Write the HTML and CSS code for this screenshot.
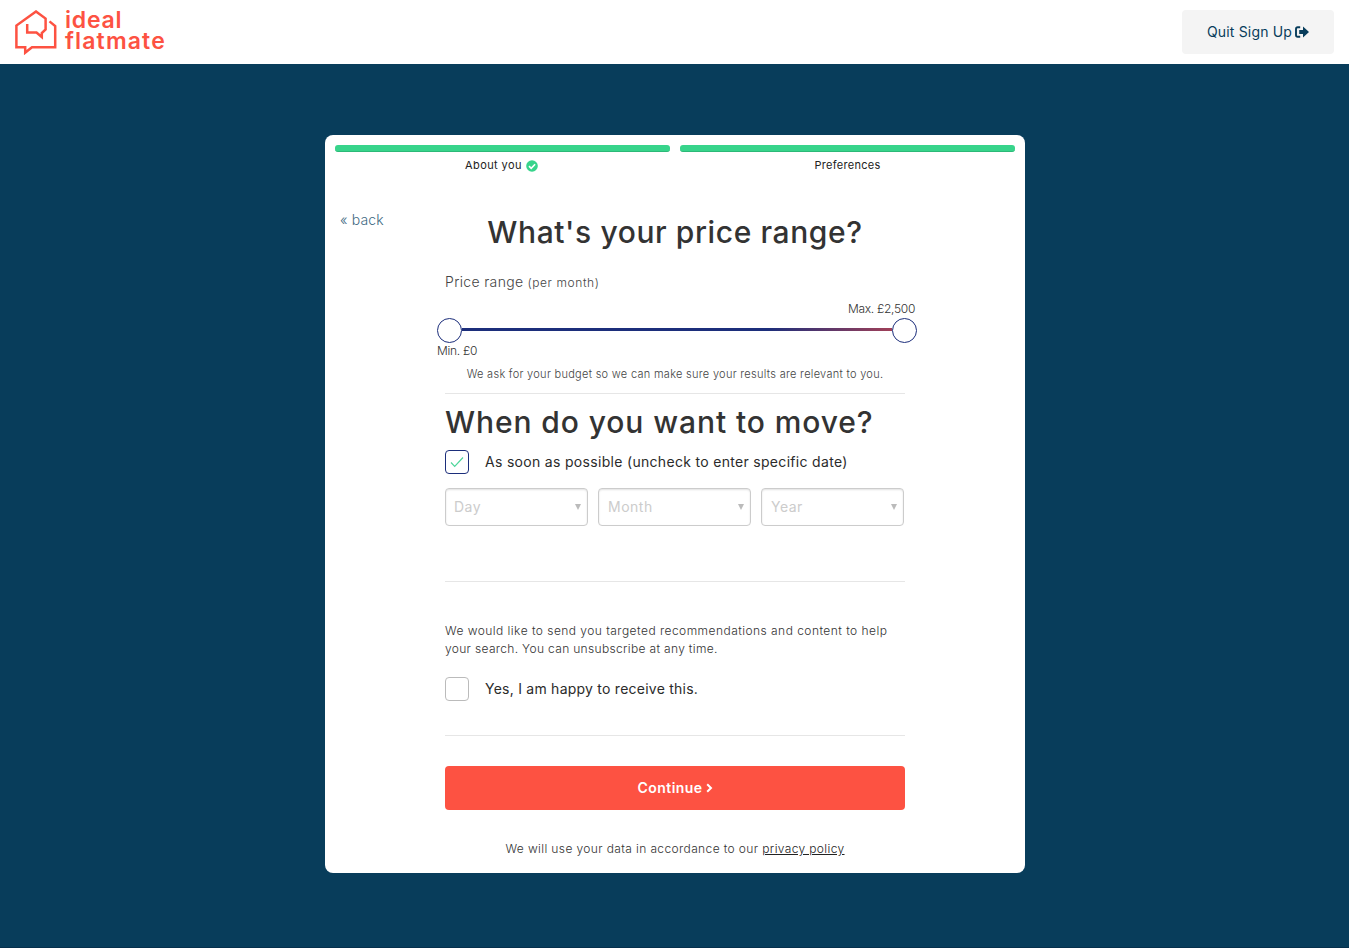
FILE: index.html
```html
<!DOCTYPE html>
<html lang="en">
<head>
<meta charset="utf-8">
<title>ideal flatmate - Sign up</title>
<link rel="stylesheet" href="styles.css">
</head>
<body>
<header class="topbar">
  <a class="logo" href="#">
    <svg class="logo-mark" width="42" height="46" viewBox="0 0 42 46" fill="none" stroke="#fd5242" stroke-width="2.5">
      <path d="M34.5 11.4 40.2 16V37.2H17L10.2 42.6V37.2H1.4V15.6L21 1.5 30.6 8.6V19.5L26.8 23V27L21.5 22.6H12.2V14"/>
    </svg>
    <span class="logo-text"><span class="logo-ideal">ideal</span><span class="logo-flatmate">flatmate</span></span>
  </a>
  <a class="quit" href="#"><span class="quit-label">Quit Sign Up</span>
    <svg width="14" height="12" viewBox="0 0 14 12"><path d="M5.2 1.2H2.7Q1 1.2 1 3V9Q1 10.8 2.7 10.8H5.2" fill="none" stroke="#083d5b" stroke-width="1.9"/><path d="M4.2 3.9H8V.4L14 6 8 11.6V8.1H4.2Z" fill="#083d5b"/></svg>
  </a>
</header>
<main class="stage">
  <section class="card">
    <ol class="steps">
      <li class="step"><span class="bar"></span><span class="step-label step-done"><span class="about">About you</span>
        <svg class="step-check" width="12" height="12" viewBox="0 0 12 12"><circle cx="6" cy="6" r="5.8" fill="#37d48b"/><path d="M3 6.2 5.2 8.3 9.1 4.3" fill="none" stroke="#fff" stroke-width="1.6"/></svg></span></li>
      <li class="step"><span class="bar"></span><span class="step-label"><span class="prefs">Preferences</span></span></li>
    </ol>
    <div class="heading-row">
      <a class="back" href="#">« back</a>
      <h1 class="title title-price">What's your price range?</h1>
    </div>
    <form class="form">
      <div class="range-label"><span class="range-name">Price range</span> <span class="range-unit">(per month)</span></div>
      <div class="slider">
        <span class="max">Max. £2,500</span>
        <div class="track"><span class="knob"></span><span class="line"></span><span class="knob"></span></div>
        <span class="min">Min. £0</span>
      </div>
      <p class="hint"><span>We ask for your budget so we can make sure your results are relevant to you.</span></p>
      <h1 class="title title-move">When do you want to move?</h1>
      <label class="check-row"><span class="box box-on"><svg width="14" height="12" viewBox="0 0 14 12"><path d="M1 6.5 4.7 10.3 13 1.5" fill="none" stroke="#4fd69b" stroke-width="1.2"/></svg></span><span class="asap">As soon as possible (uncheck to enter specific date)</span></label>
      <div class="date-row">
        <div class="select"><span class="day">Day</span><i class="caret"></i></div>
        <div class="select"><span class="month">Month</span><i class="caret"></i></div>
        <div class="select"><span class="year">Year</span><i class="caret"></i></div>
      </div>
      <p class="consent"><span class="consent-a">We would like to send you targeted recommendations and content to help</span><br><span class="consent-b">your search. You can unsubscribe at any time.</span></p>
      <label class="check-row consent-check"><span class="box"></span><span class="happy">Yes, I am happy to receive this.</span></label>
      <button class="continue" type="button"><span class="continue-label">Continue</span>
        <svg width="7" height="10" viewBox="0 0 7 10"><path d="M1.2 1.2 5 5 1.2 8.8" fill="none" stroke="#fff" stroke-width="2"/></svg></button>
      <p class="privacy"><span class="privacy-text">We will use your data in accordance to our</span> <a class="policy" href="#">privacy policy</a></p>
    </form>
  </section>
</main>
</body>
</html>
```
FILE: styles.css
```css
* { box-sizing: border-box; }
body {
  margin: 0;
  height: 948px;
  background: #083d5b;
  border-bottom: 1px solid #06304c;
  font-family: Inter, "Open Sans", sans-serif;
  font-size: 14px;
  color: #333;
}
a { color: inherit; text-decoration: none; }
p, h1, ol { margin: 0; padding: 0; }
span, a { white-space: nowrap; }

/* Header */
.topbar {
  height: 64px;
  padding: 10px 15px;
  background: #fff;
  display: flex;
  justify-content: space-between;
  align-items: flex-start;
}
.logo { display: flex; gap: 8px; color: #fd5242; }
.logo-text { display: flex; flex-direction: column; font-weight: 600; font-size: 23px; line-height: 20.5px; }
.logo-ideal { letter-spacing: .8px; }
.logo-flatmate { letter-spacing: 1.15px; }
.quit {
  width: 152px;
  height: 44px;
  padding-bottom: 1px;
  border-radius: 4px;
  background: #f4f4f4;
  color: #083d5b;
  display: flex;
  align-items: center;
  justify-content: center;
  gap: 3px;
}
.quit-label { letter-spacing: .17px; }

/* Card and progress steps */
.stage { padding-top: 71px; display: flex; justify-content: center; }
.card { width: 700px; height: 738px; margin-left: 1px; border-radius: 8px; background: #fff; }
.steps { display: flex; gap: 10px; padding: 10px 10px 0; list-style: none; }
.step { flex: 1; }
.bar { display: block; height: 7px; border-radius: 3px; background: #37d48b; border-bottom: 1px solid #2cb978; }
.step-label { height: 26px; display: flex; align-items: center; justify-content: center; gap: 4px; font-size: 11px; color: #222; }
.step-done { padding-right: 2px; }
.step-check { margin-top: 1px; }
.about { letter-spacing: .4px; }
.prefs { letter-spacing: .3px; }

.heading-row { display: flex; margin-top: 32px; padding: 0 15px; height: 44px; }
.back { width: 105px; padding-top: 1px; line-height: 17px; color: #3f6a83; font-weight: 300; letter-spacing: .15px; }
.title { font-size: 30px; line-height: 44px; font-weight: 500; white-space: nowrap; }
.title-price { width: 460px; text-align: center; letter-spacing: .6px; }

/* Price range */
.form { padding: 0 120px; }
.range-label { height: 20px; margin-top: 18px; line-height: 20px; font-weight: 300; color: #444; }
.range-name { letter-spacing: .35px; }
.range-unit { font-size: 12px; letter-spacing: .6px; }
.slider { margin: 9px -12px 0 -8px; display: flex; flex-direction: column; font-size: 12px; font-weight: 300; color: #333; line-height: 16px; letter-spacing: -.3px; }
.max { align-self: flex-end; margin-right: 2px; }
.min { align-self: flex-start; }
.track { display: flex; align-items: center; height: 25px; margin-top: 1px; }
.knob { width: 25px; height: 25px; border: 1px solid #1c2e7b; border-radius: 50%; background: #fff; }
.line { flex: 1; height: 3px; margin-bottom: 2px; background: linear-gradient(90deg, #1c2e7b 71%, #a04058); }
.hint { height: 35px; padding-top: 7px; line-height: 16px; border-bottom: 1px solid #e6e6e6; text-align: center; font-size: 11px; font-weight: 300; color: #444; letter-spacing: .29px; }

/* Move date */
.title-move { margin-top: 6px; letter-spacing: .91px; }
.check-row { display: flex; align-items: center; gap: 16px; height: 24px; margin-top: 6px; color: #2b2b2b; }
.box { width: 24px; height: 24px; border: 1px solid #bbb; border-radius: 4px; display: flex; align-items: center; justify-content: center; }
.box-on { border-color: #1c2e7b; }
.asap { letter-spacing: .31px; padding-bottom: 2px; }
.date-row { display: grid; grid-template-columns: 143px 153px 143px; gap: 10px; margin-top: 14px; height: 94px; align-items: start; border-bottom: 1px solid #e6e6e6; }
.select { height: 38px; padding: 0 6px 1px 8px; border: 1px solid #ccc; border-radius: 4px; box-shadow: inset 0 1px 2px rgba(0,0,0,.12); display: flex; align-items: center; justify-content: space-between; color: #ccc; letter-spacing: .5px; }
.month, .year { padding-left: 1px; }
.caret { border: 3px solid transparent; border-top: 6px solid #bbb; border-bottom: 0; }

/* Consent and submit */
.consent { margin-top: 40px; line-height: 18px; font-size: 12px; font-weight: 300; color: #333; }
.consent-a { letter-spacing: .46px; }
.consent-b { letter-spacing: .33px; }
.consent-check { height: 59px; margin-top: 19px; padding-bottom: 35px; border-bottom: 1px solid #e6e6e6; }
.happy { letter-spacing: .24px; }
.continue {
  display: flex;
  align-items: center;
  justify-content: center;
  gap: 3px;
  width: 100%;
  height: 44px;
  margin-top: 30px;
  padding: 0 0 1px;
  border: 0;
  border-radius: 4px;
  background: #fd5242;
  color: #fff;
  font: 600 14px Inter, "Open Sans", sans-serif;
}
.continue-label { letter-spacing: .45px; }
.privacy { margin-top: 30px; line-height: 18px; text-align: center; font-size: 12px; font-weight: 300; color: #333; letter-spacing: .38px; }
.policy { color: #222; text-decoration: underline; letter-spacing: .36px; }
```
